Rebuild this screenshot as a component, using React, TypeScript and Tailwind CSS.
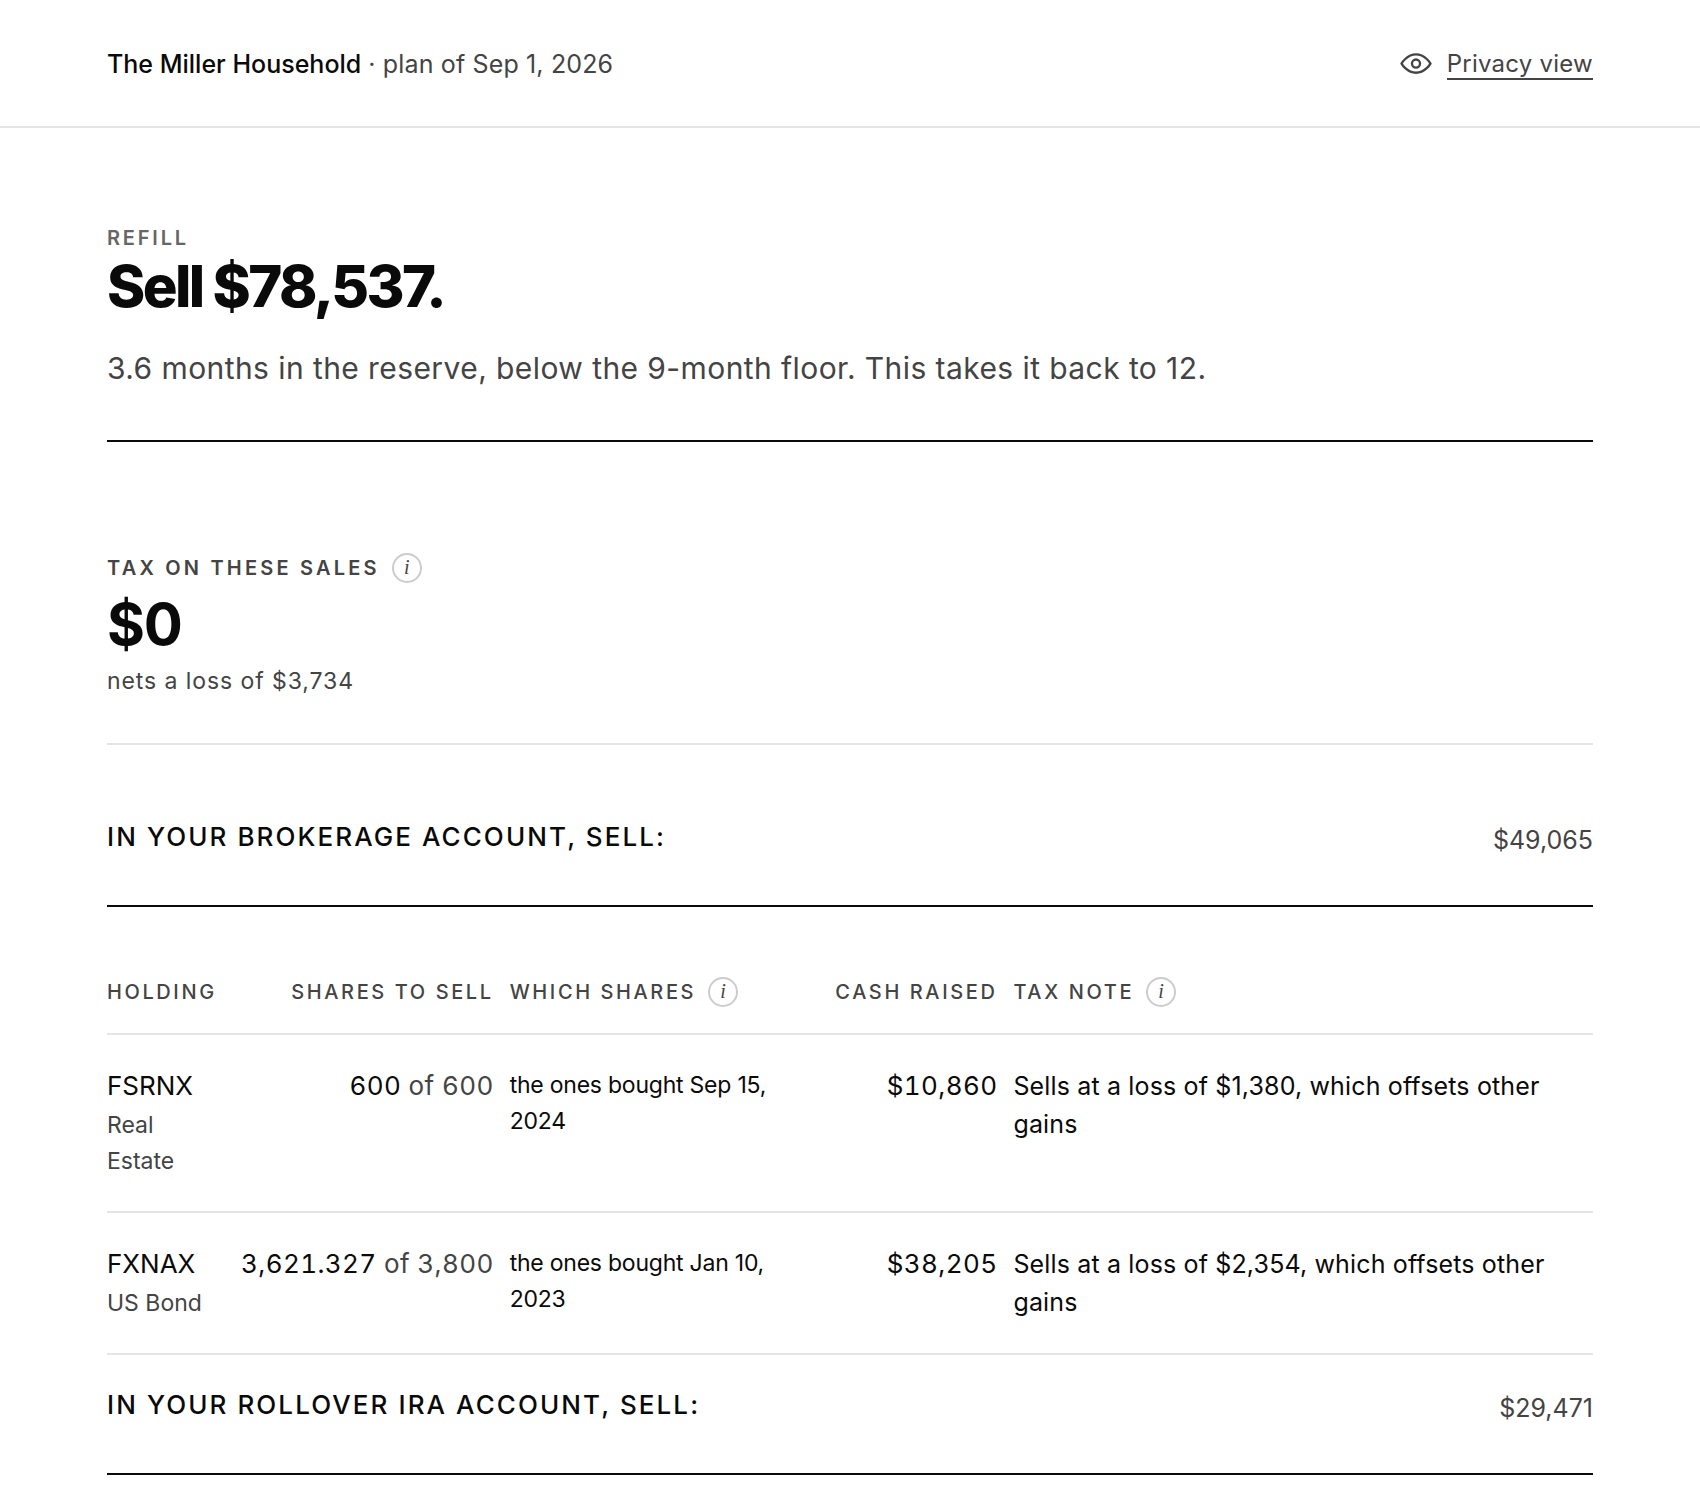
import React from "react";

const brokerageSales = [
  {
    ticker: "FSRNX",
    assetClass: "Real Estate",
    shares: "600",
    held: "600",
    lots: "the ones bought Sep 15, 2024",
    cash: "$10,860",
    note: "Sells at a loss of $1,380, which offsets other gains",
  },
  {
    ticker: "FXNAX",
    assetClass: "US Bond",
    shares: "3,621.327",
    held: "3,800",
    lots: "the ones bought Jan 10, 2023",
    cash: "$38,205",
    note: "Sells at a loss of $2,354, which offsets other gains",
  },
];

const InfoButton = ({ label }: { label: string }) => {
  return (
    <button
      type="button"
      aria-label={label}
      className="flex h-[30px] w-[30px] shrink-0 items-center justify-center rounded-full border-2 border-[#cccccc] pb-0.5 font-['Liberation_Serif',serif] text-[20px] leading-none font-normal tracking-normal text-[#444444] normal-case italic"
    >
      i
    </button>
  );
};

const EyeIcon = () => {
  return (
    <svg
      width="34"
      height="34"
      viewBox="0 0 16 16"
      fill="none"
      stroke="currentColor"
      strokeWidth="1.1"
      aria-hidden="true"
    >
      <path d="M1.2 7.8S3.6 3.5 8 3.5 14.8 7.8 14.8 7.8 12.4 12.1 8 12.1 1.2 7.8 1.2 7.8z" />
      <circle cx="8" cy="7.8" r="1.9" />
    </svg>
  );
};

const AccountHeading = ({ title, total }: { title: string; total: string }) => {
  return (
    <div className="flex items-end justify-between border-b-2 border-[#0a0a0a] pb-12">
      <h2 className="text-[26px] leading-[40px] font-medium tracking-[0.08em] uppercase">
        {title}
      </h2>
      <span className="text-[25px] leading-[34px] text-[#444444]">{total}</span>
    </div>
  );
};

const SalesTable = ({ rows }: { rows: typeof brokerageSales }) => {
  return (
    <table className="w-full table-fixed border-collapse text-left">
      <colgroup>
        <col className="w-[8%]" />
        <col className="w-[19.1%]" />
        <col className="w-[19.9%]" />
        <col className="w-[14%]" />
        <col className="w-[39%]" />
      </colgroup>
      <thead>
        <tr className="border-b-2 border-[#e5e5e5] text-[20px] leading-[32px] tracking-[0.13em] whitespace-nowrap text-[#444444] uppercase *:pt-[69px] *:pr-4 *:pb-[25px] *:font-medium">
          <th scope="col">Holding</th>
          <th scope="col" className="text-right">
            Shares to sell
          </th>
          <th scope="col">
            <span className="flex items-center gap-3">
              Which shares <InfoButton label="About which shares" />
            </span>
          </th>
          <th scope="col" className="text-right">
            Cash raised
          </th>
          <th scope="col">
            <span className="flex items-center gap-3">
              Tax note <InfoButton label="About the tax note" />
            </span>
          </th>
        </tr>
      </thead>
      <tbody>
        {rows.map((row) => (
          <tr
            key={row.ticker}
            className="border-b-2 border-[#e5e5e5] align-top *:pt-8 *:pr-4 *:pb-8"
          >
            <td>
              <div className="text-[26px] leading-[38px]">{row.ticker}</div>
              <div className="mt-0.5 text-[23px] leading-[36px] text-[#444444]">
                {row.assetClass}
              </div>
            </td>
            <td className="text-right text-[26px] leading-[38px] tracking-[0.015em] whitespace-nowrap tabular-nums">
              {row.shares} <span className="text-[#444444]">of {row.held}</span>
            </td>
            <td className="text-[23px] leading-[36px] tracking-[-0.01em]">
              {row.lots}
            </td>
            <td className="text-right text-[26px] leading-[38px] tracking-[0.015em] tabular-nums">
              {row.cash}
            </td>
            <td className="text-[25px] leading-[38px] tracking-[0.006em]">
              {row.note}
            </td>
          </tr>
        ))}
      </tbody>
    </table>
  );
};

const App = () => {
  return (
    <div className="bg-white font-['Inter',sans-serif] text-[#0a0a0a]">
      <header className="flex items-center justify-between border-b-2 border-[#e5e5e5] px-[107px] pt-[45px] pb-[43px] text-[25px] leading-[38px] text-[#444444]">
        <p>
          <strong className="font-medium text-[#0a0a0a]">
            The Miller Household
          </strong>{" "}
          <span className="tracking-[0.006em]">· plan of Sep 1, 2026</span>
        </p>
        <button type="button" className="flex items-center gap-3.5">
          <EyeIcon />
          <span className="border-b-2 border-[#444444] pt-0.5 text-[24px] leading-[28px] tracking-[0.01em]">
            Privacy view
          </span>
        </button>
      </header>

      <main className="px-[107px]">
        <section className="border-b-2 border-[#0a0a0a] pt-[94px] pb-12">
          <p className="text-[20px] leading-[32px] font-semibold tracking-[0.14em] text-[#666666] uppercase">
            Refill
          </p>
          <h1 className="text-[58px] leading-[64px] font-extrabold tracking-[-0.045em]">
            Sell $78,537.
          </h1>
          <p className="mt-[26px] text-[30px] leading-[48px] tracking-[0.014em] text-[#444444]">
            3.6 months in the reserve, below the 9-month floor. This takes it
            back to 12.
          </p>
        </section>

        <section className="border-b-2 border-[#e5e5e5] pt-[110px] pb-11">
          <div className="flex items-center gap-3 text-[20px] leading-[32px] font-semibold tracking-[0.16em] text-[#444444] uppercase">
            <h2>Tax on these sales</h2>
            <InfoButton label="About tax on these sales" />
          </div>
          <p className="mt-2 text-[58px] leading-[64px] font-bold tracking-[-0.02em]">
            $0
          </p>
          <p className="mt-[7px] text-[23px] leading-[36px] tracking-[0.04em] text-[#444444]">
            nets a loss of $3,734
          </p>
        </section>

        <section className="pt-[72px]">
          <AccountHeading
            title="In your brokerage account, sell:"
            total="$49,065"
          />
          <SalesTable rows={brokerageSales} />
        </section>

        <section className="pt-[30px]">
          <AccountHeading
            title="In your rollover IRA account, sell:"
            total="$29,471"
          />
        </section>
      </main>
    </div>
  );
};

export default App;
